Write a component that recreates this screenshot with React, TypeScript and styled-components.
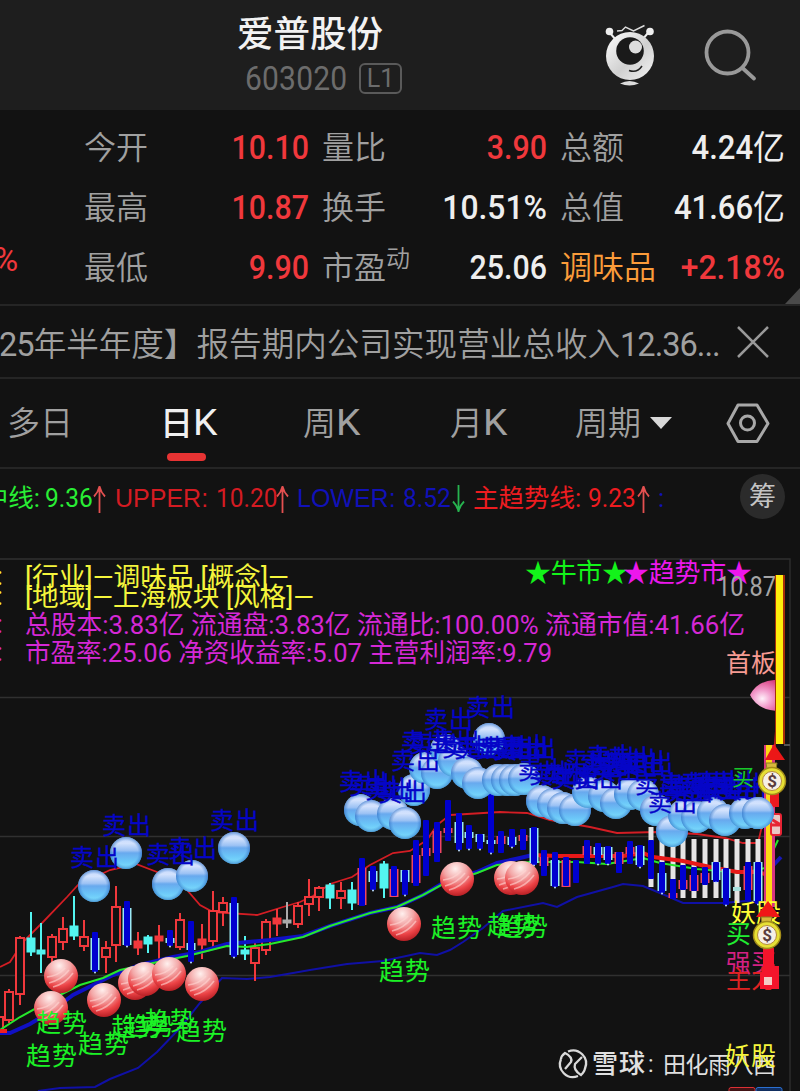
import styled, { createGlobalStyle } from "styled-components";

const GlobalStyle = createGlobalStyle`
  body {
    margin: 0;
    background: #121212;
    overflow: hidden;
  }
  * {
    box-sizing: border-box;
  }
`;

const fonts = `Roboto, "Noto Sans CJK SC", sans-serif`;

const Screen = styled.div`
  width: 800px;
  height: 1091px;
  overflow: hidden;
  background: #121212;
  color: #a0a0a0;
  font-family: ${fonts};
  white-space: nowrap;
`;

const Header = styled.header`
  display: flex;
  height: 110px;
  padding-left: 237px;
  background: #1e1e1e;
`;
const TitleBlock = styled.div`
  width: 365px;
`;
const Title = styled.div`
  height: 60px;
  padding-top: 8px;
  font-size: 36.5px;
  line-height: 54px;
  font-weight: 500;
  color: #f2f2f2;
`;
const CodeLine = styled.div`
  display: flex;
  align-items: center;
  height: 36px;
  padding-left: 8px;
`;
const Code = styled.span`
  width: 106px;
  font-size: 33px;
  letter-spacing: 0.2px;
  color: #6c6c6c;
  transform: scaleX(0.91);
  transform-origin: left;
`;
const LevelTag = styled.span`
  width: 43px;
  height: 31px;
  margin-left: 8px;
  border: 2px solid #5a5a5a;
  border-radius: 6px;
  font-size: 25px;
  line-height: 28px;
  text-align: center;
  color: #6c6c6c;
`;
const HeaderIcons = styled.div`
  display: flex;
  gap: 46px;
  padding-top: 23px;
`;

const Stats = styled.section`
  display: grid;
  grid-template-columns: 84px 98px 127px 13px 98px 127px 13px 100px 125px;
  grid-template-rows: 60px 60px 60px;
  height: 196px;
  padding-top: 8px;
  border-bottom: 2px solid #252525;
  align-items: center;
  position: relative;
`;
const Label = styled.span<{ $color?: string }>`
  font-size: 32px;
  line-height: 60px;
  font-weight: 350;
  color: ${(p) => p.$color || "#a0a0a0"};
`;
const Value = styled.span<{ $color?: string; $scale?: number }>`
  display: flex;
  justify-content: flex-end;
  font-size: 33px;
  line-height: 60px;
  font-weight: 500;
  color: ${(p) => p.$color || "#eeeeee"};
  transform: scaleX(${(p) => p.$scale || 0.92});
  transform-origin: right;
`;
const Yi = styled.span`
  font-size: 34px;
  font-weight: 400;
`;
const Sup = styled.sup`
  font-size: 24px;
  line-height: 0;
  vertical-align: 12px;
`;
const CutPercent = styled.span`
  grid-row: 3;
  margin: -18px 0 0 -6px;
  font-size: 33px;
  color: #f0383c;
`;
const Corner = styled.div`
  position: absolute;
  right: 0;
  bottom: 0;
  border-left: 15px solid transparent;
  border-bottom: 16px solid #4a4a4a;
`;

const News = styled.section`
  display: flex;
  align-items: center;
  height: 73px;
  border-bottom: 2px solid #252525;
  font-size: 32.6px;
`;
const NewsText = styled.span`
  width: 737px;
  font-weight: 350;
  margin-left: -1px;
`;
const Num = styled.span`
  font-weight: 400;
  letter-spacing: -1px;
`;

const Tabs = styled.nav`
  display: flex;
  height: 90px;
  border-bottom: 2px solid #252525;
`;
const Tab = styled.div<{ $left: number; $width: number; $active?: boolean }>`
  display: flex;
  flex-direction: column;
  width: ${(p) => p.$width}px;
  margin-left: ${(p) => p.$left}px;
  padding-top: 16px;
  font-size: 33px;
  line-height: 58px;
  font-family: ${fonts};
  font-weight: ${(p) => (p.$active ? 500 : 350)};
  color: ${(p) => (p.$active ? "#f0f0f0" : "#a0a0a0")};
`;
const K = styled.span`
  display: inline-block;
  font-weight: 400;
  font-size: 36px;
  line-height: 1;
  transform: scaleX(1.08);
  transform-origin: left;
`;
const Underline = styled.div`
  width: 39px;
  height: 8px;
  margin: 0 0 0 7px;
  border-radius: 4px;
  background: #e73333;
`;
const TabLabel = styled.div`
  display: block;
  height: 58px;
`;
const Caret = styled.svg`
  margin-left: 9px;
  vertical-align: 6px;
`;

const Indicators = styled.section`
  display: flex;
  height: 89px;
  padding-top: 5px;
`;
const Item = styled.span<{ $width: number; $color: string }>`
  width: ${(p) => p.$width}px;
  flex: none;
  font-size: 25.5px;
  line-height: 48px;
  color: ${(p) => p.$color};
`;
const CutItem = styled(Item)`
  display: flex;
  justify-content: flex-end;
  padding-right: 5px;
`;
const ItemNum = styled.span`
  display: inline-block;
  transform: scaleX(0.96);
  transform-origin: left;
`;
const Latin = styled.span`
  font-family: "Liberation Sans", sans-serif;
  font-size: 25px;
`;
const Chip = styled.div`
  width: 45px;
  height: 45px;
  margin: 0 0 0 70px;
  border-radius: 50%;
  background: #2b2b2b;
  color: #c4c4c4;
  font-size: 27px;
  line-height: 46px;
  text-align: center;
`;
const ArrowSvg = styled.svg`
  vertical-align: -7px;
`;

const ChartArea = styled.section`
  height: 533px;
  svg {
    display: block;
  }
`;

const RED = "#f0383c";

function RobotIcon() {
  return (
    <svg width="56" height="66" viewBox="0 0 56 66">
      <defs>
        <linearGradient id="robot" x1="0" y1="0" x2="1" y2="1">
          <stop offset="0" stopColor="#fff" />
          <stop offset="0.55" stopColor="#d0d0d0" />
          <stop offset="1" stopColor="#f4f4f4" />
        </linearGradient>
      </defs>
      <path d="M8 10l6 7M46 10l-6 7" stroke="#eee" strokeWidth="2" />
      <circle cx="7.500" cy="8.500" r="3.800" fill="#eee" />
      <circle cx="48" cy="8.500" r="3.800" fill="#eee" />
      <path d="M15 8l5-0.500 3.500-3.500 8 4 11-5.500" fill="none" stroke="#ddd" strokeWidth="1.400" />
      <circle cx="28" cy="33" r="24" fill="url(#robot)" />
      <circle cx="28" cy="28" r="13.800" fill="#1a1a1a" />
      <circle cx="33.500" cy="24" r="6.500" fill="#ddd" />
      <path d="M27 47.500q8 3 13-4.500" fill="none" stroke="#222" strokeWidth="1.500" />
      <path d="M18 60.500q9.500-5 19 0q-9.500 4-19 0z" fill="#ddd" />
    </svg>
  );
}

function SearchIcon() {
  return (
    <svg width="54" height="64" viewBox="0 0 54 64" fill="none" stroke="#999" strokeWidth="3.800">
      <circle cx="23.500" cy="29.500" r="21" />
      <path d="M38.500 45L50 55.500" strokeLinecap="round" />
    </svg>
  );
}

function Arrow({ down }: { down?: boolean }) {
  return (
    <ArrowSvg width="13" height="30" viewBox="0 0 13 30">
      <path
        d={down ? "M6.500 1v27M1 17.500q4 4 5.500 10q1.500-6 5.500-10" : "M6.500 29V2M1 12.500q4-4 5.500-10q1.500 6 5.500 10"}
        fill="none"
        stroke={down ? "#27b34f" : "#e45050"}
        strokeWidth="1.800"
      />
    </ArrowSvg>
  );
}

// x, high, low, body top, body bottom, kind
// r hollow, f filled red, c cyan, g gray
type Candle = [number, number, number, number, number, string];
const candles: Candle[] = [
  [-1, 1014, 1034, 1017, 1034, "r"],
  [9, 989, 1023, 992, 1020, "r"],
  [20, 936, 1005, 938, 994, "r"],
  [31, 912, 956, 938, 952, "c"],
  [41, 923, 973, 950, 954, "c"],
  [52, 934, 962, 937, 957, "r"],
  [63, 917, 950, 929, 942, "r"],
  [74, 896, 940, 926, 936, "c"],
  [84, 920, 951, 937, 946, "r"],
  [106, 941, 973, 948, 957, "r"],
  [116, 886, 962, 907, 945, "r"],
  [138, 932, 955, 941, 948, "f"],
  [148, 935, 953, 937, 944, "c"],
  [159, 925, 960, 936, 941, "f"],
  [180, 913, 950, 920, 947, "r"],
  [202, 924, 959, 939, 945, "f"],
  [213, 891, 948, 911, 941, "r"],
  [223, 897, 926, 903, 912, "r"],
  [245, 936, 960, 950, 954, "c"],
  [255, 943, 981, 948, 963, "r"],
  [266, 919, 955, 922, 950, "r"],
  [277, 909, 936, 918, 924, "f"],
  [287, 902, 928, 920, 923, "g"],
  [298, 902, 928, 906, 924, "r"],
  [309, 879, 916, 897, 904, "r"],
  [319, 886, 911, 888, 897, "r"],
  [330, 883, 909, 885, 898, "c"],
  [341, 882, 909, 891, 898, "r"],
  [352, 882, 910, 890, 903, "c"],
  [384, 861, 898, 864, 888, "c"],
];

// x, blue top, blue bottom, frame top, frame bottom, frame kind
const blues: Candle[] = [
  [95, 932, 972, 938, 970, "c"],
  [127, 901, 946, 908, 945, "c"],
  [170, 930, 946, 938, 943, "c"],
  [191, 921, 962, 943, 950, "c"],
  [234, 897, 957, 903, 955, "c"],
  [362, 858, 906, 868, 905, "r"],
  [373, 866, 890, 871, 882, "c"],
  [394, 866, 896, 869, 897, "r"],
  [405, 870, 895, 870, 882, "c"],
  [416, 840, 886, 855, 883, "r"],
  [426, 820, 876, 848, 856, "r"],
  [437, 822, 862, 831, 853, "r"],
  [448, 800, 841, 828, 833, "r"],
  [459, 813, 850, 822, 843, "c"],
  [469, 825, 849, 832, 838, "c"],
  [480, 834, 849, 834, 842, "c"],
  [491, 790, 853, 840, 844, "c"],
  [501, 831, 853, 836, 844, "r"],
  [512, 829, 847, 837, 845, "c"],
  [523, 829, 850, 835, 841, "r"],
  [534, 827, 865, 828, 863, "c"],
  [544, 850, 876, 857, 866, "r"],
  [555, 852, 887, 860, 886, "c"],
  [566, 857, 886, 860, 887, "r"],
  [576, 860, 883, 0, 0, ""],
  [587, 840, 864, 846, 855, "r"],
  [598, 843, 864, 847, 855, "c"],
  [608, 846, 864, 847, 860, "c"],
  [619, 852, 873, 852, 864, "r"],
  [630, 841, 864, 847, 854, "r"],
  [640, 845, 867, 846, 865, "c"],
  [651, 840, 879, 0, 0, ""],
  [662, 862, 893, 873, 891, "c"],
  [673, 879, 899, 893, 898, "r"],
  [683, 865, 890, 880, 889, "r"],
  [694, 867, 891, 875, 891, "r"],
  [705, 867, 885, 873, 883, "r"],
  [716, 862, 882, 862, 880, "c"],
  [726, 868, 905, 869, 898, "c"],
  [748, 862, 901, 866, 890, "r"],
  [758, 862, 904, 862, 901, "c"],
];

// x, top, bottom
const whites = [
  [651, 827, 887], [662, 839, 862], [673, 839, 879], [683, 839, 898],
  [694, 839, 898], [705, 839, 898], [716, 839, 898], [726, 839, 868],
  [737, 839, 903], [748, 839, 862], [758, 839, 862],
];

const blueBalls = [
  [94, 886], [126, 853], [168, 884], [192, 876], [234, 848],
  [360, 810], [371, 816], [393, 814], [405, 823], [414, 790], [425, 768],
  [437, 773], [446, 750], [454, 761], [467, 773], [478, 783], [489, 739],
  [498, 780], [507, 780], [515, 780], [524, 779], [542, 801], [553, 804],
  [563, 808], [575, 810], [588, 792], [604, 796], [616, 803], [630, 794],
  [643, 795], [656, 810], [672, 831], [684, 815], [697, 817], [713, 813],
  [725, 820], [745, 813], [758, 813],
];

const redBalls = [
  [61, 976], [51, 1008], [104, 1000], [135, 983], [145, 979], [169, 974],
  [202, 984], [404, 924], [457, 879], [511, 878], [522, 878],
];

const sells = [
  [70, 866], [102, 834], [146, 863], [168, 857], [210, 829],
  [339, 790], [349, 794], [365, 798], [378, 801], [391, 769], [401, 750],
  [409, 752], [424, 728], [431, 749], [442, 756], [466, 716], [454, 757],
  [475, 757], [485, 756], [493, 758], [500, 755], [507, 757], [518, 779], [529, 783],
  [540, 783], [551, 787], [564, 769], [574, 787], [580, 773], [586, 765], [592, 779],
  [600, 772], [607, 767], [617, 774], [624, 771], [635, 793], [648, 811],
  [659, 793], [664, 800], [670, 796], [680, 792], [690, 798], [695, 791],
  [702, 797], [712, 791], [718, 798],
];

const trends = [
  [36, 1032], [26, 1065], [78, 1053], [111, 1036], [123, 1035], [144, 1030],
  [176, 1040], [379, 980], [431, 937], [487, 934], [497, 936],
];

const upper =
  "0,967 10,962 23,942 43,922 67,897 78,885 110,870 136,864 157,872 173,882 187,890 200,905 213,912 227,913 257,915 283,907 300,902 313,896 330,884 352,877 370,865 393,853 410,851 427,840 437,825 450,815 467,814 500,812 527,813 550,820 590,827 617,833 657,832 697,834 725,838 743,843 758,843 765,813 773,770 776,730";
const middle =
  "0,1033 10,1033 30,1024 53,1010 73,995 93,985 113,975 140,965 173,957 200,952 227,944 270,940 303,936 330,926 370,913 397,907 423,895 443,883 477,872 497,863 520,858 537,854";
const green =
  "0,1030 20,1017 60,995 80,985 103,978 120,970 153,963 187,956 227,946 247,947 270,944 303,937 330,926 370,913 397,907 423,895 443,884 477,873 497,865 530,862 577,862 607,864 643,858 660,863 697,869 743,873 765,868 778,840";
const trendLine = "533,855 557,856 623,856 643,853 653,857 683,861 710,867 737,872 757,872 765,874";
const lower =
  "38,1091 60,1088 95,1087 110,1079 138,1068 157,1052 180,1028 200,1003 222,978 247,979 270,977 293,973 310,970 347,964 383,961 420,953 437,955 450,950 463,942 483,928 503,911 543,903 557,907 577,897 613,887 623,884 643,886 660,893 683,903 707,903 724,903 745,901 760,902";

function CandleShape({ c }: { c: Candle }) {
  const [x, hi, lo, top, bottom, kind] = c;
  const color = kind === "c" ? "#53f4f0" : kind === "g" ? "#aaa" : RED;
  return (
    <g stroke={color} strokeWidth="2">
      <path d={`M${x} ${hi}V${top}M${x} ${bottom}V${lo}`} />
      <rect x={x - 4} y={top} width="8" height={bottom - top} fill={kind === "r" ? "#121212" : color} strokeWidth={kind === "r" ? 2 : 1} />
    </g>
  );
}

function BlueShape({ c }: { c: Candle }) {
  const [x, hi, lo, top, bottom, kind] = c;
  return (
    <g>
      {kind && (
        <rect x={x - 4.500} y={top} width="9" height={bottom - top} fill={kind === "c" ? "#9be9f5" : "#ef4564"} />
      )}
      <rect x={x - 3} y={hi} width="6" height={lo - hi} rx="1" fill="#0000cf" />
      {kind === "c" && <circle cx={x} cy={lo + 0.500} r="1" fill="#bdf" />}
    </g>
  );
}

function MoneyBag({ x, y }: { x: number; y: number }) {
  return (
    <g transform={`translate(${x} ${y})`}>
      <path d="M-5-12l-1-6h11l-1 6z" fill="#d7b83c" stroke="#8b7d21" />
      <circle r="13.500" fill="#e6e035" stroke="#a48d19" strokeWidth="1.500" />
      <circle r="9.500" fill="#f6efe6" stroke="#b58a3e" />
      <text y="6" textAnchor="middle" fontSize="17" fontWeight="700" fill="#5b3d3d">$</text>
    </g>
  );
}

function Chart() {
  return (
    <svg width="800" height="533" viewBox="0 558 800 533" fontFamily={fonts}>
      <defs>
        <linearGradient id="blueBall" x1="0" y1="0" x2="0" y2="1">
          <stop offset="0" stopColor="#c3d8ff" />
          <stop offset="0.2" stopColor="#d3e2fd" />
          <stop offset="0.42" stopColor="#9cc2f4" />
          <stop offset="0.5" stopColor="#68a9ee" />
          <stop offset="0.75" stopColor="#6bc6f8" />
          <stop offset="1" stopColor="#7fe0fc" />
        </linearGradient>
        <radialGradient id="blueEdge">
          <stop offset="0.75" stopColor="#3a7fd0" stopOpacity="0" />
          <stop offset="1" stopColor="#2a6cc0" stopOpacity="0.6" />
        </radialGradient>
        <radialGradient id="redBall" cx="0.45" cy="0.2" r="0.8">
          <stop offset="0" stopColor="#fff0ee" />
          <stop offset="0.4" stopColor="#f3a8a8" />
          <stop offset="0.75" stopColor="#ec4346" />
          <stop offset="1" stopColor="#b82025" />
        </radialGradient>
        <radialGradient id="gem" cx="0.35" cy="0.6" r="0.7">
          <stop offset="0" stopColor="#fff0fa" />
          <stop offset="0.4" stopColor="#f29bcb" />
          <stop offset="1" stopColor="#d43478" />
        </radialGradient>
      </defs>

      <path d="M0 559H790V1091M0 697.500H790M0 836.500H790M0 975.500H790" fill="none" stroke="#303030" strokeWidth="1.300" />

      <polyline points={lower} fill="none" stroke="#1010a5" strokeWidth="2" />
      <polyline points={upper} fill="none" stroke="#d31d24" strokeWidth="1.800" />
      {candles.map((c) => (
        <CandleShape key={c[0]} c={c} />
      ))}
      {whites.map(([x, top, bottom]) => (
        <rect key={x} x={x - 2.500} y={top} width="5" height={bottom - top} fill="#e6e4e4" />
      ))}
      <polyline points={middle} fill="none" stroke="#1010c4" strokeWidth="4" />
      <polyline points={green} fill="none" stroke="#26e82c" strokeWidth="2" />
      <polyline points={trendLine} fill="none" stroke="#e81818" strokeWidth="4" />
      <path d="M765 874L781 857" stroke="#1818b8" strokeWidth="4" />
      <path d="M0 1031H7" stroke="#f02020" strokeWidth="4" />
      {blues.map((c) => (
        <BlueShape key={c[0]} c={c} />
      ))}
      <rect x="733" y="887" width="8" height="4" fill="#a8e2df" />

      {redBalls.map(([x, y]) => (
        <g key={x} transform={`translate(${x} ${y})`}>
          <circle r="17" fill="url(#redBall)" />
          <path d="M-12 7Q0 4 8-6M-8 11Q4 8 12-3M-14 1Q-3 0 4-8" fill="none" stroke="#ffd7d4" strokeWidth="1.600" opacity="0.600" />
        </g>
      ))}
      {blueBalls.map(([x, y]) => (
        <g key={x}>
          <circle cx={x} cy={y} r="16" fill="url(#blueBall)" />
          <circle cx={x} cy={y} r="16" fill="url(#blueEdge)" />
        </g>
      ))}

      <g fontSize="24" fill="#0505c8" stroke="#0505c8" strokeWidth="0.3">
        {sells.map(([x, y]) => (
          <text key={x} x={x} y={y} textLength="49">卖出</text>
        ))}
      </g>
      <g fontSize="25" fill="#1cf226">
        {trends.map(([x, y]) => (
          <text key={x} x={x} y={y} textLength="51">趋势</text>
        ))}
      </g>

      {/* stock information */}
      <g fontSize="26" fill="#f5f53c">
        <text x="25" y="586" textLength="264" lengthAdjust="spacingAndGlyphs">[行业]—调味品 [概念]—</text>
        <text x="25" y="606" textLength="289" lengthAdjust="spacingAndGlyphs">[地域]—上海板块 [风格]—</text>
        <text x="-3.500" y="585">:</text>
        <text x="-3.500" y="605">:</text>
      </g>
      <g fontSize="26" fill="#d528d5">
        <text x="25" y="634" textLength="720" lengthAdjust="spacingAndGlyphs">总股本:3.83亿 流通盘:3.83亿 流通比:100.00% 流通市值:41.66亿</text>
        <text x="25" y="662" textLength="527" lengthAdjust="spacingAndGlyphs">市盈率:25.06 净资收益率:5.07 主营利润率:9.79</text>
        <text x="-3.500" y="633">:</text>
        <text x="-3.500" y="661">:</text>
      </g>
      <text x="525" y="582" fontSize="26" fill="#13f31a" textLength="103">★牛市★</text>
      <text x="623" y="582" fontSize="26" fill="#ec17ec" textLength="129">★趋势市★</text>
      <text x="717" y="596" fontSize="27" fill="#a5a5a5" textLength="59" lengthAdjust="spacingAndGlyphs">10.87</text>
      <text x="726" y="672" fontSize="25" fill="#f79b92" textLength="50">首板</text>

      {/* latest bar and its markers */}
      <path d="M750 695Q757 681 774 680H783L785 686V706L780 711Q758 711 750 695z" fill="url(#gem)" />
      <rect x="775" y="575" width="10" height="169" fill="#a82f09" />
      <rect x="776" y="575" width="7" height="169" fill="#ffed0c" />
      <path d="M784 745H790" stroke="#555" strokeWidth="2" />
      <rect x="764" y="745" width="11" height="162" fill="#d83480" />
      <rect x="766" y="745" width="6" height="162" fill="#ffd714" />
      <path d="M774 744l11 16h-20z" fill="#ec1717" />
      <text x="732" y="785" fontSize="22" fill="#18c72a">买</text>
      <rect x="770" y="792" width="9" height="15" fill="#ed1920" />
      <MoneyBag x={772} y={781} />
      <rect x="771" y="814" width="10" height="21" rx="2" fill="#eac8c6" stroke="#e72434" strokeWidth="2" />
      <path d="M771 819l10 6M771 825h10" stroke="#e72434" strokeWidth="3" />
      <circle cx="758" cy="813" r="16" fill="url(#blueBall)" />
      <circle cx="758" cy="813" r="16" fill="url(#blueEdge)" />
      <text x="731" y="922" fontSize="25" fill="#ffff35">妖股</text>
      <text x="726" y="943" fontSize="25" fill="#20ec31">买</text>
      <text x="726" y="972" fontSize="25" fill="#d42182">强买</text>
      <text x="726" y="988" fontSize="25" fill="#df2222">主力</text>
      <path d="M768 901l12 16h-24z" fill="#f01717" />
      <path d="M763 948h11v18h5v23h-19v-15l3-4z" fill="#f4142b" />
      <rect x="764" y="977" width="8" height="8" fill="#f4cbc4" />
      <MoneyBag x={767} y={935} />

      {/* account mark */}
      <g fill="none" stroke="#d9d9d9" strokeWidth="2.300">
        <path d="M568 1051.500a13 13 0 0 1 17 17M578 1076a13 13 0 0 1-17-17" />
        <path d="M561 1059q0-3 4-6q8 4 6 9l-6 7M585 1068q0 3-4 7q-8-5-6-11l7-7" />
      </g>
      <g fill="#e0e0e0" fontSize="23">
        <text x="592" y="1073" fontSize="26" fontWeight="500" textLength="53">雪球</text>
        <text x="648" y="1072">:</text>
        <text x="663" y="1073" textLength="113">田化雨八西</text>
      </g>
      <text x="725" y="1065" fontSize="25" fill="#f6f63c" textLength="51">妖股</text>
      <rect x="729" y="1087.500" width="26" height="12" rx="2" fill="#421315" stroke="#dd3035" />
      <rect x="756" y="1087.500" width="26" height="12" rx="2" fill="#112e60" stroke="#2b70d2" />
    </svg>
  );
}

export default function App() {
  return (
    <Screen>
      <GlobalStyle />
      <Header>
        <TitleBlock>
          <Title>爱普股份</Title>
          <CodeLine>
            <Code>603020</Code>
            <LevelTag>L1</LevelTag>
          </CodeLine>
        </TitleBlock>
        <HeaderIcons>
          <RobotIcon />
          <SearchIcon />
        </HeaderIcons>
      </Header>

      <Stats>
        <span />
        <Label>今开</Label>
        <Value $color={RED}>10.10</Value>
        <span />
        <Label>量比</Label>
        <Value $color={RED}>3.90</Value>
        <span />
        <Label>总额</Label>
        <Value $scale={0.94}>4.24<Yi>亿</Yi></Value>
        <span />
        <Label>最高</Label>
        <Value $color={RED}>10.87</Value>
        <span />
        <Label>换手</Label>
        <Value $scale={0.965}>10.51%</Value>
        <span />
        <Label>总值</Label>
        <Value $scale={0.94}>41.66<Yi>亿</Yi></Value>
        <CutPercent>%</CutPercent>
        <Label>最低</Label>
        <Value $color={RED}>9.90</Value>
        <span />
        <Label>市盈<Sup>动</Sup></Label>
        <Value>25.06</Value>
        <span />
        <Label $color="#fb9c3a">调味品</Label>
        <Value $color={RED} $scale={0.965}>+2.18%</Value>
        <Corner />
      </Stats>

      <News>
        <NewsText>
          <Num>25</Num>年半年度】报告期内公司实现营业总收入<Num>12.36...</Num>
        </NewsText>
        <svg width="34" height="34" viewBox="0 0 34 34" stroke="#999" strokeWidth="2.500">
          <path d="M2 2L32 32M32 2L2 32" />
        </svg>
      </News>

      <Tabs>
        <Tab $left={7} $width={153}>多日</Tab>
        <Tab $left={0} $width={143} $active>
          <TabLabel>日<K>K</K></TabLabel>
          <Underline />
        </Tab>
        <Tab $left={0} $width={147}>
          <TabLabel>周<K>K</K></TabLabel>
        </Tab>
        <Tab $left={0} $width={125}>
          <TabLabel>月<K>K</K></TabLabel>
        </Tab>
        <Tab $left={0} $width={151}>
          <TabLabel>
            周期
            <Caret width="22" height="12" viewBox="0 0 22 12">
              <path d="M0 0h22L11 12z" fill="#d8d8d8" />
            </Caret>
          </TabLabel>
        </Tab>
        <svg width="44" height="88" viewBox="0 0 44 88" fill="none" stroke="#a8a8a8" strokeWidth="3">
          <path d="M12 26H31L42 44.500L31 62.500H12L2 44.500z" strokeLinejoin="round" />
          <circle cx="21.500" cy="44" r="7" />
        </svg>
      </Tabs>

      <Indicators>
        <CutItem $width={45} $color="#29ee35">中线:</CutItem>
        <Item $width={48} $color="#29ee35"><ItemNum>9.36</ItemNum></Item>
        <Item $width={22} $color="#e45050"><Arrow /></Item>
        <Item $width={101} $color="#d41b22"><Latin>UPPER:</Latin></Item>
        <Item $width={60} $color="#d41b22"><ItemNum>10.20</ItemNum></Item>
        <Item $width={21} $color="#e45050"><Arrow /></Item>
        <Item $width={106} $color="#1111b8"><Latin>LOWER:</Latin></Item>
        <Item $width={49} $color="#1111b8"><ItemNum>8.52</ItemNum></Item>
        <Item $width={21} $color="#27b34f"><Arrow down /></Item>
        <Item $width={115} $color="#ed1c20">主趋势线:</Item>
        <Item $width={49} $color="#ed1c20"><ItemNum>9.23</ItemNum></Item>
        <Item $width={21} $color="#e45050"><Arrow /></Item>
        <Item $width={12} $color="#1111b8">:</Item>
        <Chip>筹</Chip>
      </Indicators>

      <ChartArea>
        <Chart />
      </ChartArea>
    </Screen>
  );
}
